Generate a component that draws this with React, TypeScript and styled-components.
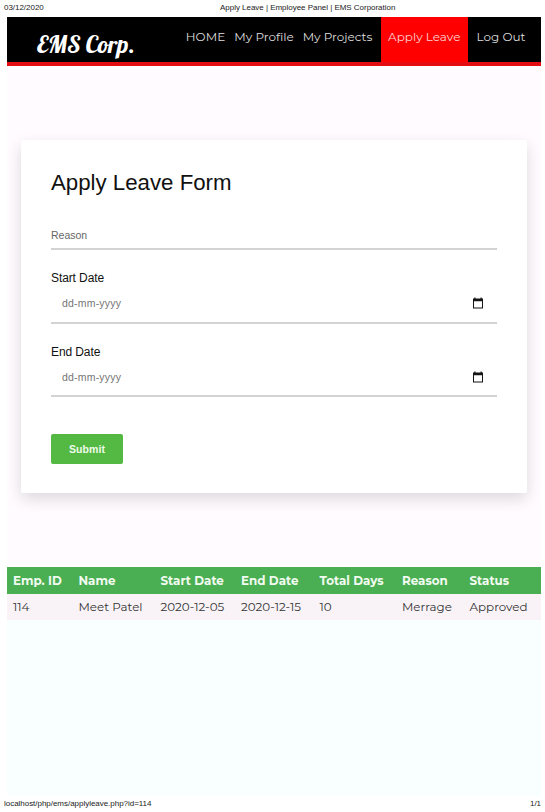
import React from "react";
import styled, { createGlobalStyle } from "styled-components";

const GlobalStyle = createGlobalStyle`
  * { box-sizing: border-box; }
  body { margin: 0; background: #fff; font-family: "Liberation Sans", Arial, sans-serif; }
`;

const Sheet = styled.div`
  width: 545px;
  height: 812px;
  overflow: hidden;
  display: flex;
  flex-direction: column;
`;

const PrintHeader = styled.div`
  height: 17px;
  flex: none;
  display: grid;
  grid-template-columns: 216px 1fr;
  padding-left: 4px;
  font-size: 8px;
  line-height: 16px;
  letter-spacing: -0.03px;
  color: #222;
  white-space: nowrap;
`;

const PrintFooter = styled.div`
  height: 16px;
  flex: none;
  display: flex;
  justify-content: space-between;
  padding: 0 4px;
  font-size: 8px;
  line-height: 15px;
  letter-spacing: -0.03px;
  color: #222;
`;

const Page = styled.div`
  width: 533.5px;
  height: 779px;
  margin-left: 7px;
  flex: none;
  display: flex;
  flex-direction: column;
  background: #f9ffff;
`;

const Header = styled.header`
  height: 49px;
  flex: none;
  display: flex;
  justify-content: space-between;
  background: #000;
  border-bottom: 4px solid #e50b12;
`;

const Logo = styled.div`
  width: 110px;
  margin: 13px 0 0 30px;
  color: #fff;
  font: 400 24px/28px Lobster, "Liberation Serif", serif;
  white-space: nowrap;
`;

const Nav = styled.nav`
  display: flex;
  padding-right: 6.5px;
`;

const NavItem = styled.a<{ $width: number; $active?: boolean }>`
  width: ${(p) => p.$width}px;
  text-align: center;
  color: ${(p) => (p.$active ? "#ffd0d0" : "#dedede")};
  background: ${(p) => (p.$active ? "#fe0000" : "transparent")};
  font: 400 12px/39px Montserrat, Inter, sans-serif;
  white-space: nowrap;
`;

const FormSection = styled.main`
  height: 501px;
  flex: none;
  padding: 74px 13.5px 0 14px;
  background: #fffbfe;
`;

const Card = styled.form`
  height: 353px;
  padding: 0 30px;
  border-radius: 2px;
  background: #fff;
  box-shadow: 0 6px 16px rgba(0, 0, 0, 0.14);
`;

const Title = styled.h1`
  margin: 0;
  padding-top: 29px;
  height: 83px;
  font-size: 22.25px;
  line-height: 27px;
  font-weight: 400;
  color: #111;
`;

const ReasonField = styled.div`
  height: 27px;
  padding-top: 5px;
  border-bottom: 2px solid #d3d3d3;
  font-size: 10.5px;
  line-height: 14px;
  color: #666;
`;

const DateField = styled.div`
  height: 73.5px;
  padding-top: 21px;
  border-bottom: 2px solid #d3d3d3;
`;

const Label = styled.label`
  display: block;
  height: 25px;
  font-size: 12px;
  line-height: 14px;
  letter-spacing: -0.1px;
  color: #111;
`;

const DateRow = styled.div`
  display: flex;
  justify-content: space-between;
  align-items: center;
  height: 14px;
  padding: 0 13px 0 11px;
  font-size: 10.5px;
  letter-spacing: 0.2px;
  color: #757575;
`;

const CalendarSvg = styled.svg`
  width: 12px;
  height: 12px;
  display: block;
`;

const Submit = styled.button`
  display: block;
  width: 72px;
  height: 30px;
  margin-top: 37px;
  padding: 0 0 1px;
  border: 0;
  border-radius: 2px;
  background: #53b943;
  color: #effbea;
  font: bold 10.5px "Liberation Sans", Arial, sans-serif;
  letter-spacing: 0.1px;
`;

const Table = styled.table`
  width: 100%;
  table-layout: fixed;
  border-collapse: collapse;
  font-family: Montserrat, Inter, sans-serif;
  font-size: 11.9px;
  white-space: nowrap;
`;

const HeadCell = styled.th<{ $width: number }>`
  width: ${(p) => p.$width}px;
  height: 27px;
  padding: 0 0 0 6px;
  text-align: left;
  font-weight: 700;
  color: #f1fbf0;
  background: #4aae52;
`;

const Cell = styled.td`
  height: 26px;
  padding: 0 0 1px 6px;
  color: #333;
  background: #f9f3f8;
`;

const links = [
  { text: "HOME", width: 56 },
  { text: "My Profile", width: 61 },
  { text: "My Projects", width: 86 },
  { text: "Apply Leave", width: 87.5, active: true },
  { text: "Log Out", width: 66 },
];

const columns = [
  { title: "Emp. ID", value: "114", width: 65.5 },
  { title: "Name", value: "Meet Patel", width: 82 },
  { title: "Start Date", value: "2020-12-05", width: 80.5 },
  { title: "End Date", value: "2020-12-15", width: 78.5 },
  { title: "Total Days", value: "10", width: 82.5 },
  { title: "Reason", value: "Merrage", width: 67.5 },
  { title: "Status", value: "Approved", width: 77 },
];

function CalendarIcon() {
  return (
    <CalendarSvg viewBox="0 0 12 12">
      <path d="M1 1.4h1.3V.4h1.2v1h5V.4h1.2v1H11v10H1zM2 4.2v6.2h8V4.2z" fill="#151515" fillRule="evenodd" />
    </CalendarSvg>
  );
}

function DateInput({ label }: { label: string }) {
  return (
    <DateField>
      <Label>{label}</Label>
      <DateRow>
        <span>dd-mm-yyyy</span>
        <CalendarIcon />
      </DateRow>
    </DateField>
  );
}

export default function App() {
  return (
    <Sheet>
      <GlobalStyle />
      <PrintHeader>
        <span>03/12/2020</span>
        <span>Apply Leave | Employee Panel | EMS Corporation</span>
      </PrintHeader>
      <Page>
        <Header>
          <Logo>EMS Corp.</Logo>
          <Nav>
            {links.map((l) => (
              <NavItem key={l.text} $width={l.width} $active={l.active}>
                {l.text}
              </NavItem>
            ))}
          </Nav>
        </Header>
        <FormSection>
          <Card>
            <Title>Apply Leave Form</Title>
            <ReasonField>Reason</ReasonField>
            <DateInput label="Start Date" />
            <DateInput label="End Date" />
            <Submit type="button">Submit</Submit>
          </Card>
        </FormSection>
        <Table>
          <thead>
            <tr>
              {columns.map((c) => (
                <HeadCell key={c.title} $width={c.width}>{c.title}</HeadCell>
              ))}
            </tr>
          </thead>
          <tbody>
            <tr>
              {columns.map((c) => (
                <Cell key={c.title}>{c.value}</Cell>
              ))}
            </tr>
          </tbody>
        </Table>
      </Page>
      <PrintFooter>
        <span>localhost/php/ems/applyleave.php?id=114</span>
        <span>1/1</span>
      </PrintFooter>
    </Sheet>
  );
}
